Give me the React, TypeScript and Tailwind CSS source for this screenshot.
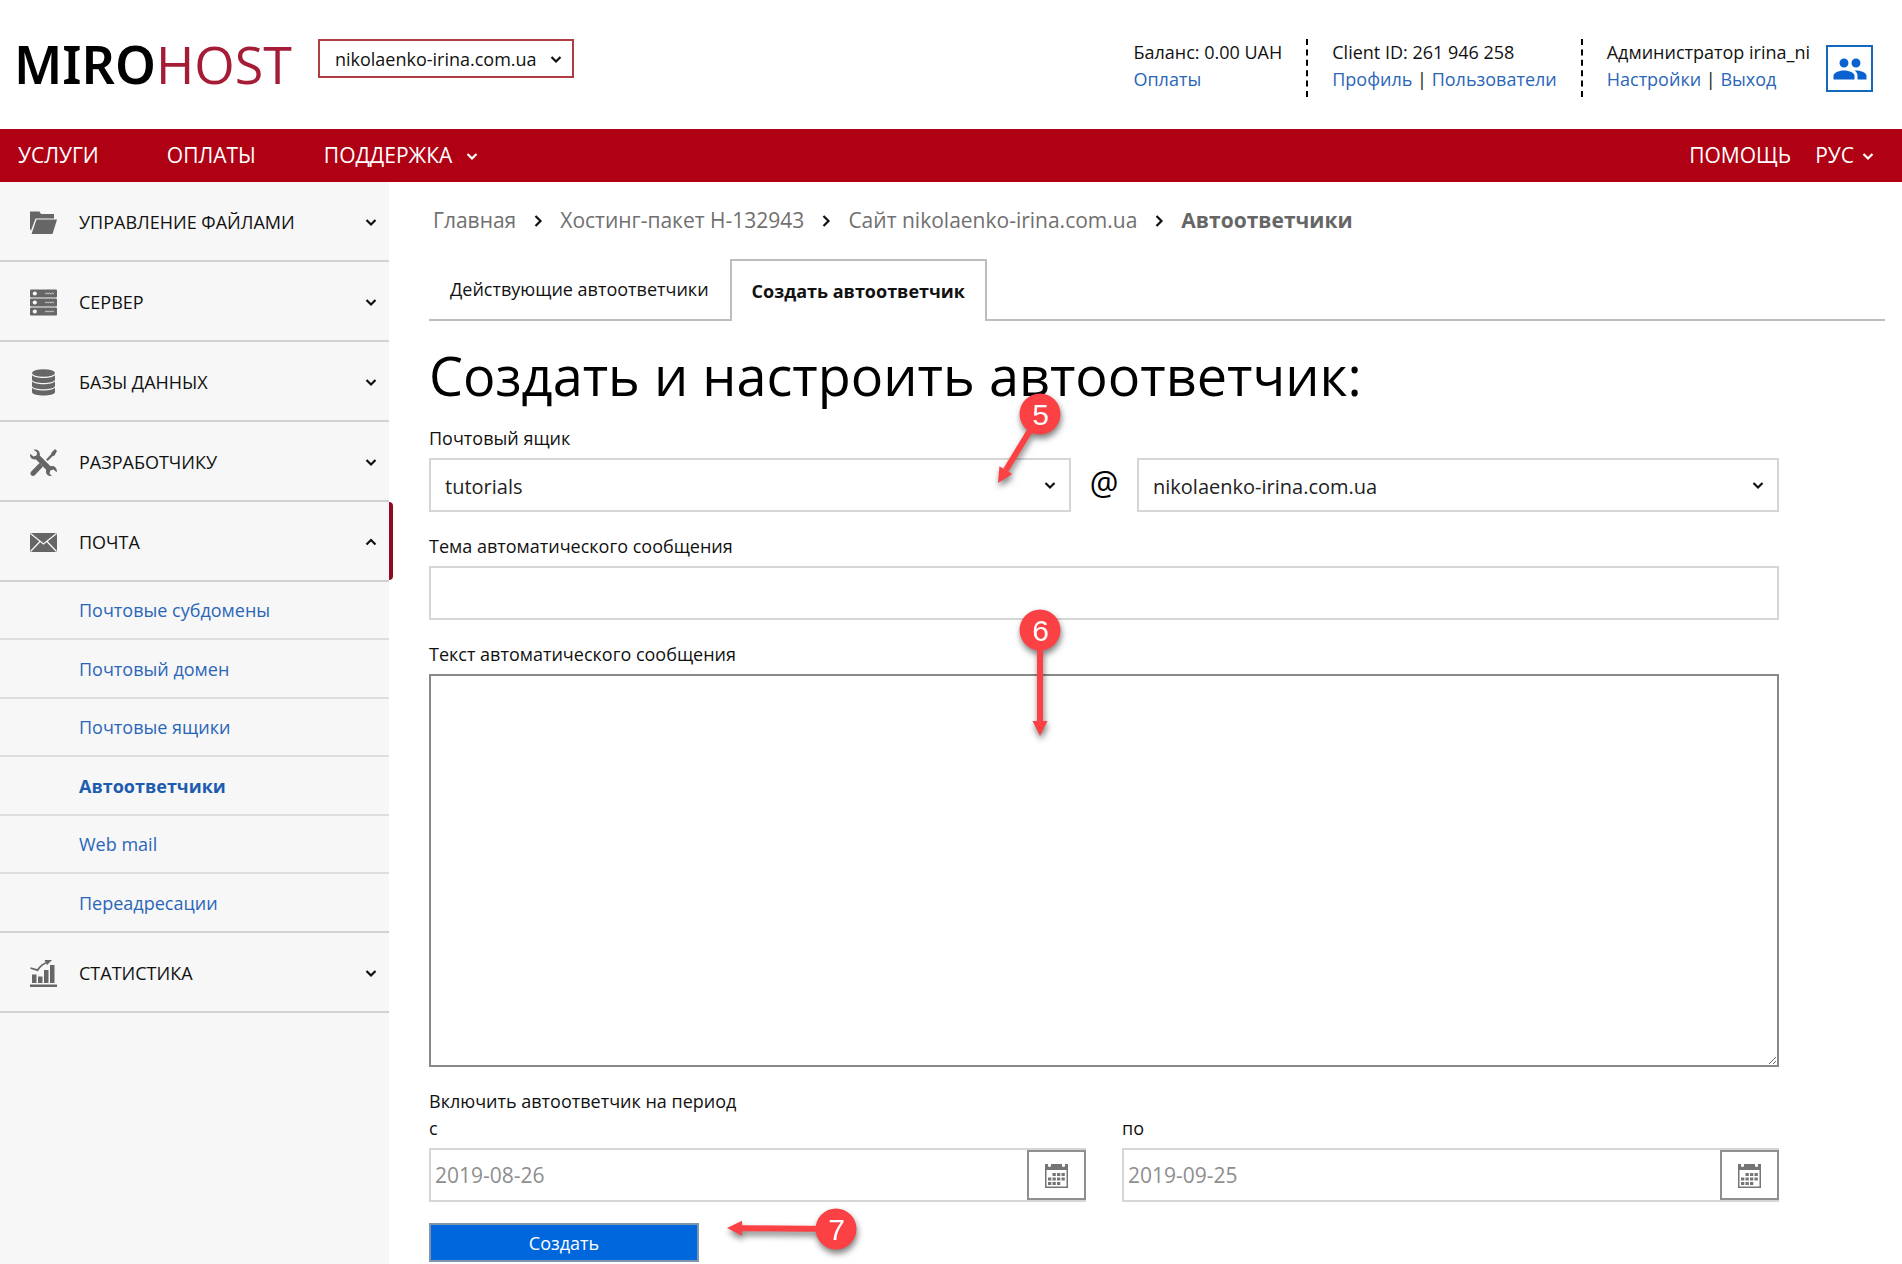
import type { ReactNode } from "react";

function Chevron({ dir = "down" }: { dir?: "down" | "up" | "right" }) {
  const d = { down: "M1.500 4l4.500 4.500L10.500 4", up: "M1.500 8.500L6 4l4.500 4.500", right: "M3.500 1l5 5-5 5" }[dir];
  return (
    <svg viewBox="0 0 12 12" className="size-3 shrink-0" fill="none" stroke="currentColor" strokeWidth="2.200" aria-hidden="true">
      <path d={d} />
    </svg>
  );
}

const icons: Record<string, ReactNode> = {
  files: (
    <>
      <path d="M0 2.500h9.500l1.500 2.500h13v4.500h-18.500L1 21.500 0 20z" />
      <path d="M6.500 10.500H27L22.500 25H1.500z" />
    </>
  ),
  server: (
    <>
      {[0, 9, 18].map((y) => (
        <g key={y}>
          <rect y={y + 0.5} width="27" height="8" rx="1" />
          <circle cx="4.800" cy={y + 4.5} r="2.100" fill="#f7f7f7" />
          <path d={`M15 ${y + 5}l1.500-1 1.500 1 1.500-1 1.500 1 1.500-1 1.500 1`} fill="none" stroke="#d4d4d4" />
        </g>
      ))}
    </>
  ),
  database: (
    <>
      <ellipse cx="13.500" cy="4" rx="11.500" ry="3.800" />
      {[0, 6.2, 12.4].map((y) => (
        <path key={y} d={`M2 ${y + 6}c2 4 21 4 23 0v4.800c-1 4.400-22 4.400-23 0z`} />
      ))}
    </>
  ),
  tools: (
    <>
      <path d="M3.500.6C7 -.4 10.500 2 9.800 6.500l10.700 10.700c4-1 7 2 6.200 6L23.500 20.500l-3.200 1-.8 3L22 27c-4.200.6-6.900-2.300-5.800-6.200L5.800 10.300C2 11.200-.6 8.500.2 4.800L3.500 7.500l3-1 .6-3z" />
      <path d="M25 0l2 2-2.500 4.500-2 .8-4.800 4.700-1.600-1.600 4.700-4.800.8-2z" />
      <path d="M9.500 14l3.500 3.500-8.200 8.700c-1 1-2.600 1-3.600 0-1-1-1-2.600 0-3.600z" />
    </>
  ),
  mail: (
    <>
      <rect y="4" width="27" height="19" rx="1" />
      <path d="M.5 4.500l13 10.500 13-10.500M.5 22.500l9.500-10M26.500 22.500l-9.500-10" fill="none" stroke="#f7f7f7" strokeWidth="1.300" />
    </>
  ),
  stats: (
    <>
      <path d="M0 24.500h27V27H0zM2 14.500h4.500V23H2zM8 16.500h4.500V23H8zM14 10h4.500v13H14zM20 5h4.500v18H20z" />
      <path d="M.5 8l7 2.200C10.500 5.500 13.500 3.500 18 2" fill="none" stroke="currentColor" strokeWidth="1.800" />
      <path d="M14.500 0H22l-5 5z" />
    </>
  ),
};

const mailLinks = ["Почтовые субдомены", "Почтовый домен", "Почтовые ящики", "Автоответчики", "Web mail", "Переадресации"];

function Section({ icon, title, open, children }: { icon: string; title: string; open?: boolean; children?: ReactNode }) {
  return (
    <>
      <button
        type="button"
        aria-expanded={!!open}
        className="relative flex h-20 w-full shrink-0 items-center border-b-2 border-[#d2d2d2] pt-0.5 pr-3 pl-[30px] text-left"
      >
        <svg viewBox="0 0 27 27" className="size-[27px]" fill="#666" color="#666" aria-hidden="true">
          {icons[icon]}
        </svg>
        <span className="flex-1 pl-[22px]">{title}</span>
        <Chevron dir={open ? "up" : "down"} />
        {open && <span className="absolute top-0 left-full h-[78px] w-1 rounded-r bg-[#900a24]" />}
      </button>
      {children}
    </>
  );
}

function Select({ id, value, label }: { id: string; value: string; label: string }) {
  return (
    <span className="relative flex-1">
      <select
        id={id}
        aria-label={label}
        className="h-[54px] w-full appearance-none border-2 border-[#d6d6d6] bg-white px-3.5 pt-1 text-xl text-[#222]"
      >
        <option>{value}</option>
      </select>
      <span className="pointer-events-none absolute inset-y-0 right-[15px] flex items-center">
        <Chevron />
      </span>
    </span>
  );
}

function DateField({ id, label, value }: { id: string; label: string; value: string }) {
  return (
    <div className="flex-1">
      <label htmlFor={id} className="block leading-[27px]">
        {label}
      </label>
      <div className="mt-1.5 flex h-[54px] border-2 border-[#d6d6d6]">
        <input id={id} defaultValue={value} className="w-full min-w-0 flex-1 px-1 text-[21px] text-[#8e8e8e]" />
        <button
          type="button"
          aria-label="Календарь"
          className="-mr-0.5 flex w-[59px] items-center justify-center border-2 border-[#8f8f8f]"
        >
          <svg viewBox="0 0 23 25" className="h-[25px] w-[23px]" aria-hidden="true">
            <path
              d="M0 1h3v1.500a1.500 1.500 0 0 0 3 0V1h11v1.500a1.500 1.500 0 0 0 3 0V1h3v24H0zM1.500 7v16.500h20V7z"
              fill="#757575"
              fillRule="evenodd"
            />
            {[[7.5, 10], [12, 10], [16.5, 10], [3, 14.5], [7.5, 14.5], [12, 14.5], [16.5, 14.5], [3, 19], [7.5, 19], [12, 19]].map(
              ([x, y]) => (
                <rect key={`${x}-${y}`} x={x} y={y} width="3.300" height="3" fill="#757575" />
              ),
            )}
          </svg>
        </button>
      </div>
    </div>
  );
}

function Callout({ n, dx, dy, className }: { n: number; dx: number; dy: number; className: string }) {
  const len = Math.hypot(dx, dy);
  const ux = dx / len;
  const uy = dy / len;
  const bx = dx - ux * 15;
  const by = dy - uy * 15;
  return (
    <span className={`pointer-events-none absolute z-10 size-[41px] drop-shadow-[1px_4px_3px_rgba(0,0,0,0.5)] ${className}`}>
      <svg viewBox="-20 -20 41 41" className="absolute inset-0 size-full overflow-visible" fill="#fb4143" aria-hidden="true">
        <circle cx="0" cy="0" r="20.500" />
        <line x1="0" y1="0" x2={bx} y2={by} stroke="#fb4143" strokeWidth="6" />
        <path d={`M${dx} ${dy}L${bx - uy * 7.5} ${by + ux * 7.5}L${bx + uy * 7.5} ${by - ux * 7.5}z`} />
      </svg>
      <span className="relative flex size-full items-center justify-center font-['Liberation_Sans',sans-serif] text-3xl leading-none text-white">
        {n}
      </span>
    </span>
  );
}

const link = "text-[#2a66b8]";

export default function App() {
  return (
    <div className="flex min-h-screen flex-col bg-white font-['Open_Sans',sans-serif] text-lg text-[#111]">
      <header className="flex h-[129px] shrink-0 items-start justify-between pr-[29px] pl-[14px]">
        <div className="flex items-start">
          <a href="#" aria-label="MIROHOST" className="flex items-baseline pt-8 text-[52px] leading-[64px]">
            <span className="font-['Noto_Sans',sans-serif] font-semibold text-black">MIRO</span>
            <span className="text-[#a51c37]">HOST</span>
          </a>
          <div className="relative mt-[39px] ml-[26px]">
            <select
              aria-label="Сайт"
              className="h-[39px] w-64 appearance-none border-2 border-[#b03c44] bg-white pr-8 pl-[15px] text-lg"
            >
              <option>nikolaenko-irina.com.ua</option>
            </select>
            <span className="pointer-events-none absolute inset-y-0 right-3 flex items-center">
              <Chevron />
            </span>
          </div>
        </div>
        <div className="flex pt-[39px] leading-[27px]">
          <div className="pr-6">
            <p>Баланс: 0.00 UAH</p>
            <a href="#" className={link}>Оплаты</a>
          </div>
          <div className="h-[58px] border-l-2 border-dashed border-black pr-6 pl-6">
            <p>Client ID: 261 946 258</p>
            <a href="#" className={link}>Профиль</a> | <a href="#" className={link}>Пользователи</a>
          </div>
          <div className="h-[58px] border-l-2 border-dashed border-black pl-6">
            <p>Администратор irina_ni</p>
            <a href="#" className={link}>Настройки</a> | <a href="#" className={link}>Выход</a>
          </div>
          <button
            type="button"
            aria-label="Пользователи"
            className="mt-1.5 ml-4 flex size-[47px] items-center justify-center border-2 border-[#1268bd] text-[#0a62d0]"
          >
            <svg viewBox="0 0 24 24" className="size-9" fill="currentColor" aria-hidden="true">
              <path d="M16 11c1.660 0 2.990-1.340 2.990-3S17.660 5 16 5c-1.660 0-3 1.340-3 3s1.340 3 3 3zm-8 0c1.660 0 2.990-1.340 2.990-3S9.660 5 8 5C6.340 5 5 6.340 5 8s1.340 3 3 3zm0 2c-2.330 0-7 1.170-7 3.500V19h14v-2.500c0-2.330-4.670-3.500-7-3.500zm8 0c-.290 0-.620.020-.970.050 1.160.840 1.970 1.970 1.970 3.450V19h6v-2.500c0-2.330-4.670-3.500-7-3.500z" />
            </svg>
          </button>
        </div>
      </header>

      <nav className="flex h-[53px] shrink-0 items-center justify-between bg-[#b00014] pr-7 pl-[18px] text-[21px] text-white">
        <div className="flex gap-[68px]">
          <a href="#">УСЛУГИ</a>
          <a href="#">ОПЛАТЫ</a>
          <a href="#" className="flex items-center gap-3.5">ПОДДЕРЖКА <Chevron /></a>
        </div>
        <div className="flex gap-6">
          <a href="#">ПОМОЩЬ</a>
          <a href="#" className="flex items-center gap-2">РУС <Chevron /></a>
        </div>
      </nav>

      <div className="flex flex-1">
        <aside className="w-[389px] shrink-0 bg-[#f7f7f7]">
          <Section icon="files" title="УПРАВЛЕНИЕ ФАЙЛАМИ" />
          <Section icon="server" title="СЕРВЕР" />
          <Section icon="database" title="БАЗЫ ДАННЫХ" />
          <Section icon="tools" title="РАЗРАБОТЧИКУ" />
          <Section icon="mail" title="ПОЧТА" open>
            <ul>
              {mailLinks.map((t) => (
                <li
                  key={t}
                  className="flex h-[58px] items-center border-b-2 border-[#dedede] pl-[79px] last:border-[#d2d2d2] even:h-[59px]"
                >
                  <a href="#" className={t === "Автоответчики" ? "font-bold text-[#1e5cb0]" : link}>{t}</a>
                </li>
              ))}
            </ul>
          </Section>
          <Section icon="stats" title="СТАТИСТИКА" />
        </aside>

        <main className="min-w-0 flex-1 pr-[17px] pb-0.5 pl-10">
          <div className="flex h-[77px] items-center gap-4 pl-1 text-[21px] text-[#707070]">
            <a href="#">Главная</a>
            <span className="text-[#111]"><Chevron dir="right" /></span>
            <a href="#">Хостинг-пакет H-132943</a>
            <span className="text-[#111]"><Chevron dir="right" /></span>
            <a href="#">Сайт nikolaenko-irina.com.ua</a>
            <span className="text-[#111]"><Chevron dir="right" /></span>
            <span className="font-bold text-[#666]">Автоответчики</span>
          </div>

          <div role="tablist" className="flex h-[62px]">
            <button type="button" role="tab" aria-selected="false" className="border-b-2 border-[#bdbdbd] px-[21px]">
              Действующие автоответчики
            </button>
            <button
              type="button"
              role="tab"
              aria-selected="true"
              className="border-2 border-b-0 border-[#bdbdbd] px-5 font-bold"
            >
              Создать автоответчик
            </button>
            <span className="flex-1 border-b-2 border-[#bdbdbd]" />
          </div>

          <h1 className="pt-5 text-[54px] leading-[68px] text-black">Создать и настроить автоответчик:</h1>

          <form className="flex flex-col pt-4 pr-[106px]" onSubmit={(e) => e.preventDefault()}>
            <label htmlFor="box" className="leading-[27px]">Почтовый ящик</label>
            <div className="relative mt-1.5 flex">
              <Select id="box" label="Почтовый ящик" value="tutorials" />
              <span className="w-[66px] text-center text-[32px] leading-[50px] text-black">@</span>
              <Select id="domain" label="Домен" value="nikolaenko-irina.com.ua" />
              <Callout n={5} dx={-42} dy={69} className="right-1/2 -top-16 mr-[43px]" />
            </div>
            <label htmlFor="subject" className="mt-[21px] leading-[27px]">Тема автоматического сообщения</label>
            <input id="subject" className="mt-1.5 h-[54px] border-2 border-[#d6d6d6] px-3.5" />
            <label htmlFor="body" className="mt-[21px] leading-[27px]">Текст автоматического сообщения</label>
            <div className="relative mt-1.5 flex">
              <textarea id="body" className="h-[393px] w-full resize border-2 border-[#888] p-3" />
              <Callout n={6} dx={0} dy={106} className="right-1/2 -top-16 mr-[43px]" />
            </div>
            <fieldset className="mt-[21px]">
              <legend className="leading-[27px]">Включить автоответчик на период</legend>
              <div className="flex gap-9">
                <DateField id="from" label="с" value="2019-08-26" />
                <DateField id="to" label="по" value="2019-09-25" />
              </div>
            </fieldset>
            <div className="relative mt-[21px] w-[270px]">
              <button type="submit" className="h-[39px] w-full border-2 border-[#7d96ae] bg-[#0066dc] text-white">
                Создать
              </button>
              <Callout n={7} dx={-109} dy={-1} className="-top-3.5 left-full ml-[117px]" />
            </div>
          </form>
        </main>
      </div>
    </div>
  );
}
